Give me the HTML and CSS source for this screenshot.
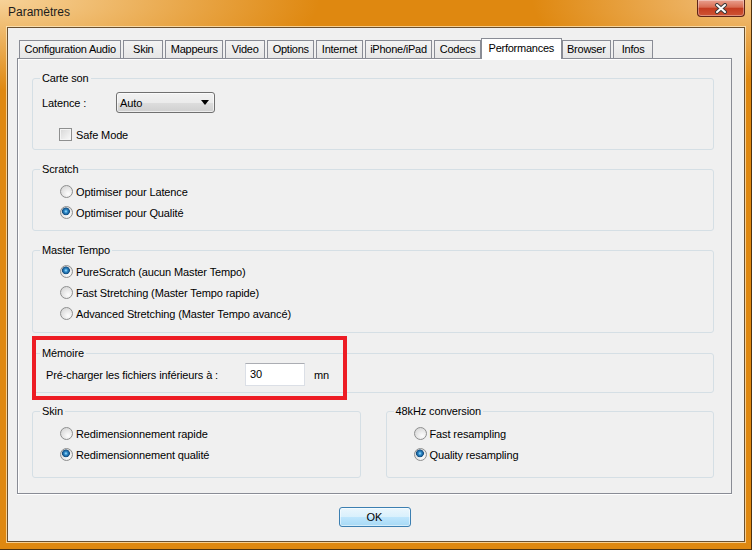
FILE: index.html
```html
<!DOCTYPE html>
<html lang="fr">
<head>
  <meta charset="UTF-8" />
  <title>Paramètres</title>
  <link rel="stylesheet" href="styles.css">
</head>
<body>
  <div class="window">
    <div class="titlebar">
      <span class="title">Paramètres</span>
      <button class="close" aria-label="Fermer">
        <svg width="14" height="11" viewBox="0 0 14 11">
          <path d="M3 2 L11 9 M11 2 L3 9" stroke="#3b3b3b" stroke-width="4" stroke-linecap="round" />
          <path d="M3 2 L11 9 M11 2 L3 9" stroke="#fff" stroke-width="2" stroke-linecap="round" />
        </svg>
      </button>
    </div>

    <div class="client">
      <div class="tabs">
        <div class="tab">Configuration Audio</div>
        <div class="tab">Skin</div>
        <div class="tab">Mappeurs</div>
        <div class="tab">Video</div>
        <div class="tab">Options</div>
        <div class="tab">Internet</div>
        <div class="tab">iPhone/iPad</div>
        <div class="tab">Codecs</div>
        <div class="tab active">Performances</div>
        <div class="tab">Browser</div>
        <div class="tab">Infos</div>
      </div>

      <div class="panel">
        <fieldset class="group group-son">
          <legend>Carte son</legend>
          <div class="row-latence">
            <span class="field-label">Latence :</span>
            <div class="combo"><span>Auto</span><span class="arrow"></span></div>
          </div>
          <div class="option check-row"><span class="checkbox"></span>Safe Mode</div>
        </fieldset>

        <fieldset class="group group-scratch">
          <legend>Scratch</legend>
          <div class="option"><span class="radio"></span>Optimiser pour Latence</div>
          <div class="option"><span class="radio on"></span>Optimiser pour Qualité</div>
        </fieldset>

        <fieldset class="group group-tempo">
          <legend>Master Tempo</legend>
          <div class="option"><span class="radio on"></span>PureScratch (aucun Master Tempo)</div>
          <div class="option"><span class="radio"></span>Fast Stretching (Master Tempo rapide)</div>
          <div class="option"><span class="radio"></span>Advanced Stretching (Master Tempo avancé)</div>
        </fieldset>

        <fieldset class="group group-mem">
          <legend>Mémoire</legend>
          <div class="row-mem">
            <span class="mem-label">Pré-charger les fichiers inférieurs à :</span>
            <div class="edit">30</div>
            <span class="unit">mn</span>
          </div>
        </fieldset>

        <div class="pair">
          <fieldset class="group group-bottom">
            <legend>Skin</legend>
            <div class="option"><span class="radio"></span>Redimensionnement rapide</div>
            <div class="option"><span class="radio on"></span>Redimensionnement qualité</div>
          </fieldset>
          <fieldset class="group group-bottom">
            <legend>48kHz conversion</legend>
            <div class="option"><span class="radio"></span>Fast resampling</div>
            <div class="option"><span class="radio on"></span>Quality resampling</div>
          </fieldset>
        </div>

        <div class="highlight"></div>
      </div>

      <div class="buttons">
        <button class="ok">OK</button>
      </div>
    </div>
  </div>
</body>
</html>
```

FILE: styles.css
```css
* {
  box-sizing: border-box;
}

body {
  margin: 0;
  font-family: 'Liberation Sans', Arial, sans-serif;
  font-size: 11px;
  letter-spacing: -0.12px;
  color: #000;
}

/* cadre de la fenêtre (Aero orange) */
.window {
  width: 752px;
  height: 550px;
  display: flex;
  flex-direction: column;
  background:
    radial-gradient(ellipse 320px 90px at 0 0, rgba(248, 214, 160, 0.95), rgba(248, 214, 160, 0) 100%),
    radial-gradient(ellipse 220px 80px at 100% 0, rgba(244, 200, 140, 0.9), rgba(244, 200, 140, 0) 100%),
    #df8810;
  box-shadow: inset -1px -1px 0 #4d3210;
}

.titlebar {
  height: 27px;
  flex-shrink: 0;
  display: flex;
  justify-content: space-between;
  align-items: flex-start;
}

.title {
  padding: 5px 0 0 8px;
  font-size: 12px;
  line-height: 14px;
  letter-spacing: 0;
  color: #1c1c1c;
}

.close {
  width: 48px;
  height: 17px;
  margin-right: 7px;
  padding: 0;
  display: flex;
  align-items: center;
  justify-content: center;
  border: 1px solid #5e2418;
  border-top: none;
  border-radius: 0 0 4px 4px;
  background: linear-gradient(#e9a08e 0%, #d86c52 45%, #c43c20 52%, #cf5434 100%);
  box-shadow: inset 0 0 0 1px rgba(255, 255, 255, 0.35);
}

.client {
  height: 515px;
  margin: 0 7px 0 7px;
  padding: 10px 12px 0 9px;
  background: #f0f0f0;
  border: 1px solid #6a5030;
  box-shadow: 0 0 0 1px rgba(255, 236, 200, 0.7);
}

/* onglets */
.tabs {
  height: 20px;
  display: flex;
  align-items: flex-end;
  padding-left: 2px;
  position: relative;
  z-index: 1;
}

.tab {
  height: 18px;
  min-width: 40px;
  margin-right: 2px;
  padding: 0 4.5px;
  line-height: 17px;
  letter-spacing: -0.25px;
  text-align: center;
  white-space: nowrap;
  border: 1px solid #898c95;
  border-bottom: none;
  background: linear-gradient(#f3f3f3, #e6e6e6);
}

.tab.active {
  height: 21px;
  margin: 0 0 -1px -2px;
  padding: 0 6.5px;
  line-height: 18px;
  background: #fff;
}

.panel {
  position: relative;
  height: 436px;
  padding: 12px 17px 0 14px;
  border: 1px solid #898c95;
  background: #f0f0f0;
  box-shadow: inset 1px 1px 0 #fff, 0 1px 0 #fff;
  display: flex;
  flex-direction: column;
  gap: 12px;
}

/* cadres de groupe */
.group {
  margin: 0;
  padding: 0;
  min-width: 0;
  border: 1px solid #d5dfe5;
  border-radius: 3px;
}

.group legend {
  margin-left: 7px;
  padding: 0 2px;
  line-height: 14px;
}

.group-son {
  padding-top: 7px;
  padding-bottom: 4px;
}

.group-scratch {
  padding-top: 5px;
  padding-bottom: 7px;
}

.group-tempo {
  padding-top: 4px;
  padding-bottom: 8px;
}

.group-mem {
  margin-top: 1px;
  padding-top: 3px;
  padding-bottom: 6px;
}

.group-bottom {
  padding-top: 5px;
  padding-bottom: 12px;
}

.row-latence {
  height: 21px;
  display: flex;
  align-items: center;
  padding-left: 9px;
}

.field-label {
  width: 74px;
}

.combo {
  width: 99px;
  height: 21px;
  display: flex;
  align-items: center;
  justify-content: space-between;
  padding: 0 5px 0 3px;
  border: 1px solid #707070;
  border-radius: 3px;
  background: linear-gradient(#f2f2f2 0%, #ebebeb 50%, #dddddd 51%, #cfcfcf 100%);
  box-shadow: inset 0 0 0 1px rgba(255, 255, 255, 0.6);
}

.arrow {
  border-style: solid;
  border-width: 5px 4px 0 4px;
  border-color: #000 transparent transparent transparent;
}

.option {
  height: 21px;
  display: flex;
  align-items: center;
  padding-left: 27px;
}

.check-row {
  margin-top: 11px;
  padding-left: 26px;
}

.checkbox {
  width: 13px;
  height: 13px;
  margin-right: 4px;
  border: 1px solid #8e8f8f;
  background: linear-gradient(135deg, #d6d6d6, #fafafa);
  box-shadow: inset 0 0 0 1px #f4f4f4;
}

.radio {
  width: 13px;
  height: 13px;
  margin-right: 3px;
  border-radius: 50%;
  border: 1px solid #8e8f8f;
  background: radial-gradient(circle at 65% 70%, #fdfdfd 0%, #e6e6e6 50%, #cfcfcf 100%);
}

.radio.on {
  background:
    radial-gradient(circle at 45% 40%, #a8e4ff 0, #2f8ccc 1.6px, #134d80 3.6px, rgba(19, 77, 128, 0) 4.2px),
    radial-gradient(circle at 65% 70%, #fdfdfd 0%, #e6e6e6 50%, #cfcfcf 100%);
}

.row-mem {
  height: 23px;
  display: flex;
  align-items: center;
  padding-left: 13px;
}

.mem-label {
  width: 199px;
}

.edit {
  width: 60px;
  height: 23px;
  padding-left: 4px;
  line-height: 21px;
  background: #fff;
  border: 1px solid #dbdfe6;
  border-top-color: #abadb3;
}

.unit {
  margin-left: 9px;
}

.pair {
  display: grid;
  grid-template-columns: 1fr 1fr;
  gap: 25px;
  margin-top: -1px;
}

/* cadre rouge d'annotation */
.highlight {
  position: absolute;
  left: 14px;
  top: 277px;
  width: 315px;
  height: 64px;
  border: 4px solid #ed1c24;
}

.buttons {
  display: flex;
  justify-content: center;
  margin-top: 13px;
}

.ok {
  width: 72px;
  height: 20px;
  padding: 0;
  font-family: inherit;
  font-size: 11px;
  color: #000;
  border: 1px solid #3c7fb1;
  border-radius: 3px;
  background: linear-gradient(#eaf6fd 0%, #d9f0fc 49%, #bee6fd 50%, #a7d9f5 100%);
  box-shadow: inset 0 0 0 1px rgba(255, 255, 255, 0.5);
}
```
